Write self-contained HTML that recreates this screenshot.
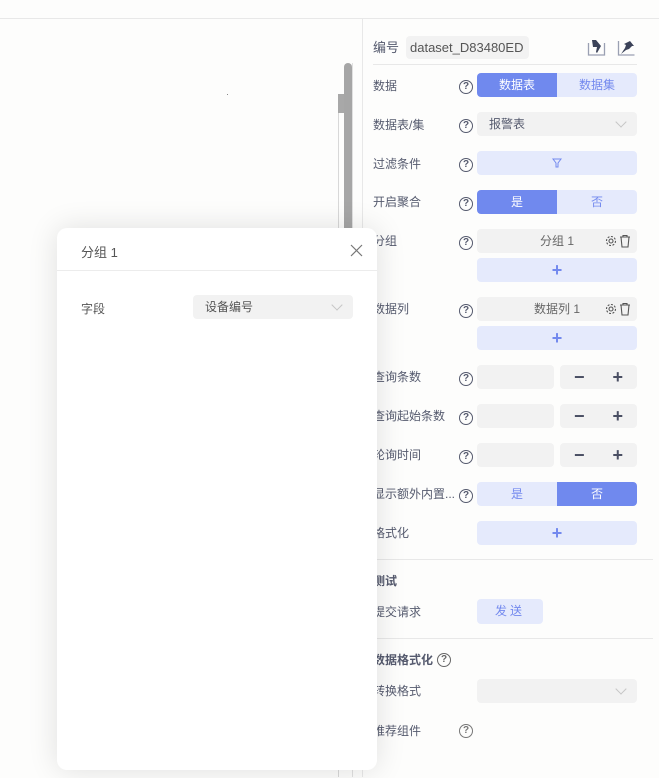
<!DOCTYPE html>
<html><head><meta charset="utf-8"><style>
*{box-sizing:border-box;margin:0;padding:0}
body{width:659px;height:777px;overflow:hidden;background:#fdfdfc;font-family:"Liberation Sans","Noto Sans CJK SC",sans-serif;font-size:12px;color:#555a6e;position:relative}
.a{position:absolute}
.lbl{position:absolute;left:373px;font-size:12px;color:#555a6e;line-height:16px}
.q{position:absolute;left:459px;width:14px;height:14px;border:1.5px solid #555a6e;border-radius:50%;font-size:10px;font-weight:bold;text-align:center;line-height:11px;color:#555a6e}
.c{position:absolute;left:477px;width:160px;height:24px;border-radius:4px;text-align:center;line-height:24px;font-size:12px}
.gray{background:#f2f2f2}
.lt{background:#e5eafc;color:#7389ee}
.pr{background:#7089ee;color:#fff}
.plus{font-size:18px;color:#7389ee;font-weight:bold}
.seg{position:absolute;left:477px;width:160px;height:24px;border-radius:4px;overflow:hidden;display:flex}
.seg div{flex:1;text-align:center;line-height:24px}
.pm{position:absolute;left:560px;width:77px;height:24px;background:#f2f2f2;border-radius:4px;display:flex;justify-content:space-around;align-items:center;font-size:18px;font-weight:bold;color:#4a4f63}
.inp{position:absolute;left:477px;width:77px;height:24px;background:#f2f2f2;border-radius:4px}
.chev{position:absolute;right:12px;top:6px;width:8px;height:8px;border-right:1px solid #c6c6c6;border-bottom:1px solid #c6c6c6;transform:rotate(45deg)}
.hr{position:absolute;height:1px;background:#e8e8e8}
.ic{position:absolute;right:4px;top:5px}
#rp{position:absolute;left:0;top:1px;width:659px;height:777px}
</style></head><body>
<div class="hr" style="left:0;top:18px;width:659px"></div>
<div class="a" style="left:362px;top:19px;width:1px;height:758px;background:#e8e8e8"></div>
<div class="a" style="left:338px;top:94px;width:1px;height:683px;background:#d8d8d8"></div>
<div class="a" style="left:338px;top:94px;width:6px;height:19px;background:#a8a8a8"></div>
<div class="a" style="left:344px;top:63px;width:8px;height:700px;background:#a6a6a6;border-radius:4px"></div>
<div class="a" style="left:352px;top:63px;width:1px;height:714px;background:#e0e0e0"></div>
<div class="a" style="left:227px;top:94px;width:1px;height:1px;background:#888"></div>
<div id="rp">
<div class="lbl" style="top:39px;font-size:13px">编号</div>
<div class="a" style="left:406px;top:35px;width:123px;height:23px;background:#f2f2f2;border-radius:4px;line-height:23px;padding-left:4px;font-size:13px;color:#555">dataset_D83480ED</div>
<svg class="a" style="left:587px;top:37px" width="20" height="18" viewBox="0 0 20 18"><path d="M1.5 5v12h16V5" fill="none" stroke="#9aa0b2" stroke-width="1.3"/><path d="M5 2h4l5 6-4 7-1-1 1-5H6z" fill="#3b4258"/></svg>
<svg class="a" style="left:617px;top:37px" width="20" height="18" viewBox="0 0 20 18"><path d="M1.5 3v14h16" fill="none" stroke="#9aa0b2" stroke-width="1.3"/><path d="M4 16l4-6 1-3-2-1 6-3 4 5-2 0-3 3-3 1z" fill="#3b4258"/></svg>
<div class="hr" style="left:373px;top:63px;width:264px"></div>

<div class="lbl" style="top:77px">数据</div><div class="q" style="top:79px">?</div>
<div class="seg" style="top:72px"><div class="pr">数据表</div><div class="lt">数据集</div></div>

<div class="lbl" style="top:116px">数据表/集</div><div class="q" style="top:118px">?</div>
<div class="c gray" style="top:111px;text-align:left;padding-left:12px">报警表<span class="chev"></span></div>

<div class="lbl" style="top:155px">过滤条件</div><div class="q" style="top:157px">?</div>
<div class="c lt" style="top:150px"><svg width="10" height="10" viewBox="0 0 10 10" style="vertical-align:-1px"><path d="M1 1h8L6 5v4H4V5z" fill="none" stroke="#7389ee"/></svg></div>

<div class="lbl" style="top:193px">开启聚合</div><div class="q" style="top:196px">?</div>
<div class="seg" style="top:189px"><div class="pr">是</div><div class="lt">否</div></div>

<div class="lbl" style="top:232px">分组</div><div class="q" style="top:235px">?</div>
<div class="c gray" style="top:228px;color:#666">分组 1<svg class="ic" width="28" height="14" viewBox="0 0 28 14"><circle cx="6" cy="7" r="2" fill="none" stroke="#555" stroke-width="1.1"/><circle cx="6" cy="7" r="4.5" fill="none" stroke="#555" stroke-width="1.1" stroke-dasharray="2 1.5"/><path d="M15 3h10M18 3V1.5h4V3M16 3l1 10h6l1-10" fill="none" stroke="#555" stroke-width="1.1"/></svg></div>
<div class="c lt plus" style="top:257px">+</div>

<div class="lbl" style="top:300px">数据列</div><div class="q" style="top:303px">?</div>
<div class="c gray" style="top:296px;color:#666">数据列 1<svg class="ic" width="28" height="14" viewBox="0 0 28 14"><circle cx="6" cy="7" r="2" fill="none" stroke="#555" stroke-width="1.1"/><circle cx="6" cy="7" r="4.5" fill="none" stroke="#555" stroke-width="1.1" stroke-dasharray="2 1.5"/><path d="M15 3h10M18 3V1.5h4V3M16 3l1 10h6l1-10" fill="none" stroke="#555" stroke-width="1.1"/></svg></div>
<div class="c lt plus" style="top:325px">+</div>

<div class="lbl" style="top:368px">查询条数</div><div class="q" style="top:371px">?</div>
<div class="inp" style="top:364px"></div><div class="pm" style="top:364px"><span>−</span><span>+</span></div>
<div class="lbl" style="top:407px">查询起始条数</div><div class="q" style="top:410px">?</div>
<div class="inp" style="top:403px"></div><div class="pm" style="top:403px"><span>−</span><span>+</span></div>
<div class="lbl" style="top:446px">轮询时间</div><div class="q" style="top:449px">?</div>
<div class="inp" style="top:442px"></div><div class="pm" style="top:442px"><span>−</span><span>+</span></div>

<div class="lbl" style="top:485px">显示额外内置...</div><div class="q" style="top:488px">?</div>
<div class="seg" style="top:481px"><div class="lt">是</div><div class="pr">否</div></div>

<div class="lbl" style="top:524px">格式化</div>
<div class="c lt plus" style="top:520px">+</div>
<div class="hr" style="left:363px;top:558px;width:290px"></div>

<div class="lbl" style="top:572px;font-weight:bold">测试</div>
<div class="lbl" style="top:603px">提交请求</div>
<div class="a lt" style="left:477px;top:598px;width:66px;height:25px;border-radius:4px;text-align:center;line-height:25px;letter-spacing:3px">发送</div>
<div class="hr" style="left:363px;top:637px;width:290px"></div>

<div class="lbl" style="top:651px;font-weight:bold">数据格式化</div><div class="q" style="left:437px;top:652px;border-color:#666;color:#666">?</div>
<div class="lbl" style="top:682px">转换格式</div>
<div class="c gray" style="top:678px"><span class="chev"></span></div>
<div class="lbl" style="top:722px">推荐组件</div><div class="q" style="top:723px;border-color:#777;color:#777">?</div>
</div>
<div class="a" style="left:57px;top:228px;width:320px;height:542px;background:#fff;border-radius:10px;box-shadow:0 0 30px rgba(0,0,0,0.12)">
<div class="a" style="left:24px;top:14px;font-size:13px;color:#555">分组 1</div>
<svg class="a" style="left:293px;top:16px" width="13" height="13" viewBox="0 0 13 13"><path d="M1 1l11 11M12 1L1 12" stroke="#777" stroke-width="1.2"/></svg>
<div class="hr" style="left:0;top:42px;width:320px;background:#ececec"></div>
<div class="a" style="left:24px;top:72px;color:#555">字段</div>
<div class="a" style="left:136px;top:67px;width:160px;height:24px;background:#f2f2f2;border-radius:4px;line-height:25px;padding-left:12px;color:#555">设备编号<span class="chev"></span></div>
</div>
</body></html>
